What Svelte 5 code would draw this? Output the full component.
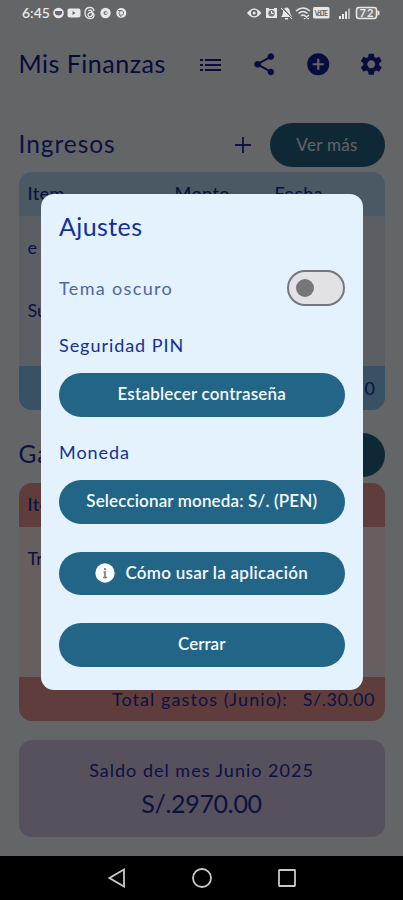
<script>
  const income = ['e', 'Su'];
  const expenses = ['Tr'];
</script>

<div class="screen">
  <header class="status">
    <span class="time">6:45</span>
    <svg class="left" width="76" height="14" viewBox="0 0 76 14" fill="#e8e8e8">
      <circle cx="5.5" cy="7" r="5.3" /><path d="M2 5h7v2.500q-1 2-3.500 2T2 7.500z" fill="#666" />
      <rect x="14.500" y="2.500" width="13" height="9" rx="2" /><path d="M19.500 5v4l3-2z" fill="#666" />
      <g fill="none" stroke="#e8e8e8" stroke-width="1.300"><path d="M41 5C40 0 32 0 32 7s9 7 9 2.500S35 6 35 9s5 2 4.500-2S36 4 35.500 5" /></g>
      <circle cx="52.500" cy="7" r="5.200" /><circle cx="52.500" cy="7" r="2" fill="#777" /><circle cx="53" cy="7" r="1" />
      <circle cx="68.300" cy="7" r="5" /><path d="M65 4.500l4 0M66 7a2.300 2.300 0 1 0 4.600 0a2.300 2.300 0 1 0-4.600 0M66.500 9l2 2.500" fill="none" stroke="#777" />
    </svg>
    <svg class="right" width="134" height="14" viewBox="0 0 134 14" fill="#e8e8e8">
      <path d="M0 7q7.200-9 14.400 0q-7.200 9-14.400 0z" /><circle cx="7.200" cy="7" r="3.200" fill="#666" /><circle cx="7.200" cy="7" r="1.500" />
      <path d="M19 2h3v1h5V2h3v10H19z" /><circle cx="24.500" cy="7.200" r="3.200" fill="#777" /><path d="M24.500 5v2.500h2" fill="none" stroke="#fff" />
      <path d="M34 11q2-2 2-5t3-4.500q4 0 4 5.500l2 4zM38 12h3v1.500h-3z" /><path d="M35 1.500l10 11" stroke="#666" stroke-width="1.500" /><path d="M34 2l11 11" stroke="#e8e8e8" />
      <g fill="none" stroke="#e8e8e8" stroke-width="1.500"><path d="M49 5q7-6 14 0M51.500 7.500q4.500-4 9 0M54 10q2-2 4 0M57 9l5 4M62 9l-5 4" /></g>
      <rect x="66" y="1" width="16.500" height="11.500" rx="1.500" />
      <text x="67.500" y="9.500" font-size="7" font-weight="700" fill="#666" textLength="13.500">VoLTE</text>
      <path d="M92 10h2v3h-2zM95 8h2v5h-2zM98 5.500h2V13h-2z" /><path d="M101 2.500h2V13h-2z" opacity=".6" />
      <rect x="109.500" y="1.500" width="20" height="11" rx="2.500" fill="#777" stroke="#e8e8e8" stroke-width="1.500" />
      <path d="M130.500 4l2 1.500v3l-2 1.500z" />
      <text x="112.500" y="11" font-size="11" font-weight="700" textLength="14">72</text>
    </svg>
  </header>

  <main>
    <div class="bar">
      <h1>Mis Finanzas</h1>
      <div class="actions">
        <svg width="21" height="14" viewBox="0 0 21 14" stroke="currentColor" stroke-width="2"><path d="M0 2h3M5 2h16M0 7h3M5 7h16M0 12h3M5 12h16" /></svg>
        <svg width="26.500" height="26.500" viewBox="0 0 24 24" fill="currentColor"><path d="M18 16.080c-.760 0-1.440.300-1.960.770L8.910 12.700c.050-.230.090-.460.090-.700s-.040-.470-.090-.700l7.050-4.110c.540.500 1.250.810 2.040.810 1.660 0 3-1.340 3-3s-1.340-3-3-3-3 1.340-3 3c0 .240.040.470.090.700L8.040 9.810C7.500 9.310 6.790 9 6 9c-1.660 0-3 1.340-3 3s1.340 3 3 3c.790 0 1.500-.310 2.040-.810l7.120 4.160c-.050.210-.080.430-.080.650 0 1.610 1.310 2.920 2.920 2.920s2.920-1.310 2.920-2.920-1.310-2.920-2.920-2.920z" /></svg>
        <svg width="26.500" height="26.500" viewBox="0 0 24 24" fill="currentColor"><path d="M12 2C6.480 2 2 6.480 2 12s4.480 10 10 10 10-4.480 10-10S17.520 2 12 2zm5 11h-4v4h-2v-4H7v-2h4V7h2v4h4v2z" /></svg>
        <svg width="26.500" height="26.500" viewBox="0 0 24 24" fill="currentColor"><path d="M19.140 12.940c.040-.300.060-.610.060-.940 0-.320-.020-.640-.070-.940l2.030-1.580c.180-.140.230-.410.120-.610l-1.920-3.320c-.120-.220-.370-.290-.590-.220l-2.390.960c-.500-.380-1.030-.700-1.620-.940L14.400 2.810c-.040-.240-.240-.410-.480-.410h-3.840c-.240 0-.430.170-.470.410L9.250 5.350C8.660 5.590 8.120 5.920 7.630 6.290L5.240 5.330c-.220-.080-.470 0-.590.220L2.740 8.870c-.120.210-.080.470.120.610l2.030 1.580c-.050.300-.090.630-.090.940s.020.640.070.940l-2.030 1.580c-.180.140-.230.410-.120.610l1.920 3.320c.120.220.370.290.590.220l2.390-.960c.500.380 1.030.700 1.620.940l.360 2.540c.050.240.240.410.480.410h3.840c.240 0 .440-.170.470-.410l.360-2.540c.590-.240 1.130-.560 1.620-.940l2.390.960c.220.080.470 0 .590-.220l1.920-3.320c.120-.220.070-.470-.120-.610l-2.010-1.580zM12 15.600c-1.980 0-3.600-1.620-3.600-3.600s1.620-3.600 3.600-3.600 3.600 1.620 3.600 3.600-1.620 3.600-3.600 3.600z" /></svg>
      </div>
    </div>

    <div class="section">
      <h2>Ingresos</h2>
      <svg class="plus" width="16" height="16" viewBox="0 0 16 16" stroke="currentColor" stroke-width="1.800"><path d="M8 0v16M0 8h16" /></svg>
      <button class="more">Ver más</button>
    </div>
    <section class="table blue">
      <div class="thead"><span class="c1">Item</span><span class="c2">Monto</span><span class="c3">Fecha</span></div>
      <div class="tbody">{#each income as name}<div class="row">{name}</div>{/each}</div>
      <div class="tfoot">0</div>
    </section>

    <div class="section second">
      <h2>Gastos</h2>
      <button class="more" aria-label="Ver más"></button>
    </div>
    <section class="table red">
      <div class="thead"><span class="c1">Item</span></div>
      <div class="tbody">{#each expenses as name}<div class="row">{name}</div>{/each}</div>
      <div class="tfoot"><span class="label">Total gastos (Junio):</span><span class="sum">S/.30.00</span></div>
    </section>

    <section class="balance">
      <div class="caption">Saldo del mes Junio 2025</div>
      <div class="amount">S/.2970.00</div>
    </section>
  </main>

  <nav>
    <svg width="18" height="20" viewBox="0 0 18 20"><path d="M16 1.500v17L1.500 10z" /></svg>
    <svg width="20" height="20" viewBox="0 0 20 20"><circle cx="10" cy="10" r="9" /></svg>
    <svg width="18" height="18" viewBox="0 0 18 18"><rect x="1" y="1" width="16" height="16" rx=".5" /></svg>
  </nav>

  <div class="scrim"></div>
  <div class="dialog" role="dialog">
    <h3>Ajustes</h3>
    <div class="theme"><span>Tema oscuro</span><span class="switch"><i></i></span></div>
    <h4 class="pin">Seguridad PIN</h4>
    <button class="pill"><span class="b1">Establecer contraseña</span></button>
    <h4 class="currency">Moneda</h4>
    <button class="pill"><span class="b2">Seleccionar moneda: S/. (PEN)</span></button>
    <button class="pill gap">
      <svg width="20" height="20" viewBox="0 0 20 20"><circle cx="10" cy="10" r="9.700" fill="#fff" /><path d="M10 5v2M8.500 9H10v5.500M8 14.500h4" fill="none" stroke="#71808a" stroke-width="1.700" /></svg>
      <span class="b3">Cómo usar la aplicación</span>
    </button>
    <button class="pill gap"><span class="b4">Cerrar</span></button>
  </div>
</div>

<style>
  :global(body) { background: #000; }
  * { box-sizing: border-box; }
  h1, h2, h3, h4 { margin: 0; font-weight: 400; }
  button { border: 0; padding: 0; font: inherit; color: inherit; }
  svg { flex: none; display: block; }
  .screen { position: relative; width: 403px; height: 900px; overflow: hidden; display: flex; flex-direction: column; background: #f8fcff; font-family: Lato, "Noto Sans", sans-serif; color: #1a2fa8; white-space: nowrap; }
  .status { position: relative; z-index: 2; height: 27px; display: flex; align-items: center; padding: 0 22px; color: #e8e8e8; }
  .time { font-size: 14px; font-weight: 600; width: 31px; line-height: 24px; padding-bottom: 2px; }
  .status svg { margin-bottom: 1px; }
  .status .right { margin-left: auto; }
  main { height: 829px; padding: 0 18.500px; display: flex; flex-direction: column; }
  .bar { height: 75px; display: flex; align-items: center; justify-content: space-between; color: #10209a; }
  h1 { font-size: 25px; letter-spacing: .5px; padding-bottom: 3px; }
  .actions { display: flex; align-items: center; gap: 27px; }
  .actions svg:first-child { margin-right: 3.500px; }
  .section { display: flex; align-items: center; height: 44px; margin-top: 21px; margin-bottom: 5px; }
  .section.second { margin-top: 23px; margin-bottom: 6px; }
  h2 { font-size: 24.500px; letter-spacing: .95px; padding-bottom: 3px; }
  .plus { margin-left: auto; margin-right: 19px; }
  .more { width: 115px; height: 44px; border-radius: 22px; background: #236587; color: #f0f6fc; font-size: 17px; letter-spacing: .3px; padding-bottom: 2px; }
  .second .more { margin-left: auto; }
  .table { display: flex; flex-direction: column; border-radius: 13px; overflow: hidden; font-size: 18px; }
  .table.blue { height: 238px; background: #e3eefb; }
  .table.red { height: 238px; background: #ffebee; }
  .thead, .tfoot { height: 44px; flex: none; display: flex; align-items: center; }
  .thead { padding: 0 0 2px 9px; font-weight: 500; letter-spacing: .4px; }
  .c1 { width: 147px; } .c2 { width: 100px; }
  .blue .thead { background: #bbdefb; } .blue .tfoot { background: #90caf9; }
  .red .thead, .red .tfoot { background: #ef9a9a; }
  .tbody { flex: 1; padding-left: 9px; }
  .row { height: 62.500px; display: flex; align-items: center; }
  .tfoot { justify-content: flex-end; padding: 0 9.500px 1px 0; gap: 15px; }
  .label { letter-spacing: 1.070px; }
  .sum { letter-spacing: .5px; }
  .balance { margin-top: 19px; height: 97px; border-radius: 13px; background: #d9c8e8; text-align: center; padding-top: 17px; }
  .caption { font-size: 18px; line-height: 26px; letter-spacing: 1px; }
  .amount { font-size: 25px; line-height: 40px; letter-spacing: -.3px; }
  nav { height: 44px; position: relative; z-index: 2; background: #000; display: flex; align-items: center; justify-content: center; gap: 66px; fill: none; stroke: #c8c8c8; stroke-width: 1.800; }
  .scrim { position: absolute; inset: 0 0 44px; background: rgba(0, 0, 0, .6); }
  .dialog { position: absolute; z-index: 3; left: 41px; top: 194px; width: 321.500px; height: 496px; border-radius: 13px; background: #e3f2fd; padding: 17px 18px 0; display: flex; flex-direction: column; color: #14309b; }
  h3 { font-size: 25px; line-height: 30px; letter-spacing: .4px; }
  .theme { display: flex; justify-content: space-between; align-items: center; height: 36px; margin-top: 29px; font-size: 18px; letter-spacing: 1.350px; color: #4d67a9; }
  .theme > span:first-child { padding-bottom: 1px; }
  .switch { width: 58px; height: 36px; border: 2px solid #747980; border-radius: 18px; background: #e2e2e6; display: flex; align-items: center; padding-left: 7px; }
  .switch i { width: 18px; height: 18px; border-radius: 50%; background: #74767b; }
  h4 { font-size: 18px; line-height: 24px; letter-spacing: .950px; }
  .pin { margin: 27px 0 16px; }
  .currency { margin: 23.500px 0 16px; }
  .pill { height: 43.500px; flex: none; border-radius: 22px; background: #236587; color: #f4faff; font-size: 17px; font-weight: 600; display: flex; align-items: center; justify-content: center; gap: 10px; }
  .pill span { padding-bottom: 2px; }
  .b1 { letter-spacing: .2px; } .b2 { letter-spacing: .150px; } .b3 { letter-spacing: .280px; }
  .gap { margin-top: 28px; }
</style>
